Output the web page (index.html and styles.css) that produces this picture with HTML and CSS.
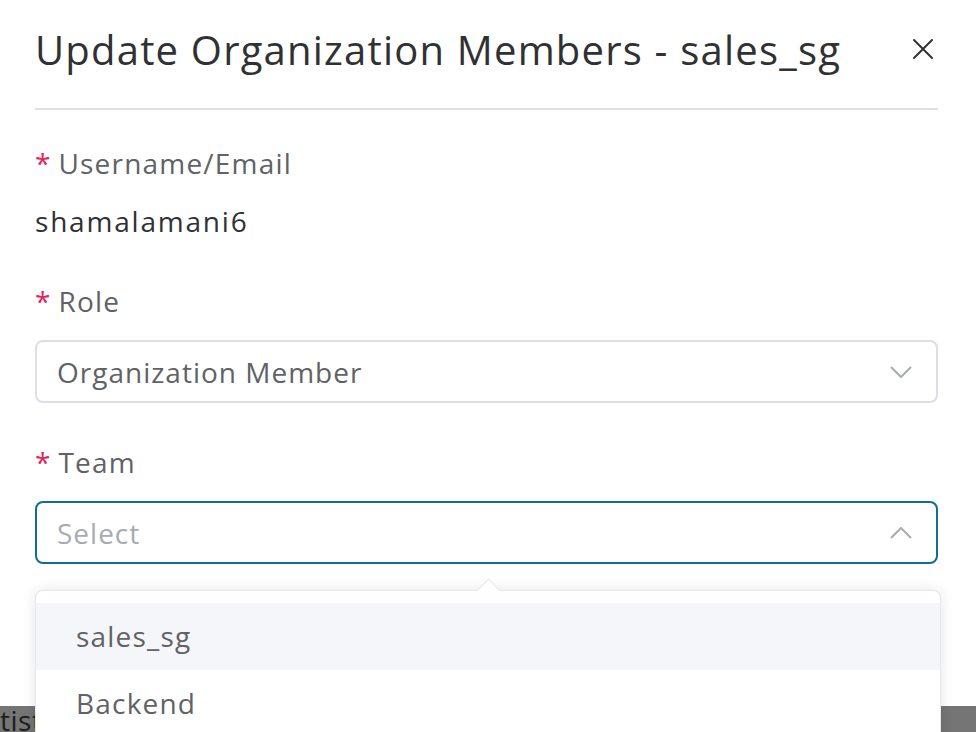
FILE: index.html
```html
<!DOCTYPE html>
<html>
<head>
<meta charset="utf-8">
<link rel="stylesheet" href="styles.css">
</head>
<body>
<div class="page">
  <div class="modal">
    <div class="header">
      <div class="title">Update Organization Members - sales_sg</div>
      <button class="close" aria-label="Close">
        <svg width="22" height="22" viewBox="0 0 22 22"><path d="M2 2 L20 20 M20 2 L2 20" stroke="#303133" stroke-width="2" fill="none" stroke-linecap="round"/></svg>
      </button>
    </div>
    <div class="form">
      <div class="item">
        <div class="label"><span class="req">*</span>Username/Email</div>
        <div class="value">shamalamani6</div>
      </div>
      <div class="item">
        <div class="label"><span class="req">*</span>Role</div>
        <div class="select">
          <span class="sel-text">Organization Member</span>
          <svg class="chev" width="22" height="12" viewBox="0 0 22 12"><path d="M1 1 L11 11 L21 1" stroke="#a8abb2" stroke-width="2" fill="none"/></svg>
        </div>
      </div>
      <div class="item">
        <div class="label"><span class="req">*</span>Team</div>
        <div class="select focus">
          <span class="sel-text placeholder">Select</span>
          <svg class="chev" width="22" height="12" viewBox="0 0 22 12"><path d="M1 11 L11 1 L21 11" stroke="#a8abb2" stroke-width="2" fill="none"/></svg>
        </div>
      </div>
    </div>
  </div>
  <div class="mask"><span class="behind">tist</span></div>
  <div class="dropdown">
    <div class="arrow"></div>
    <ul class="options">
      <li class="option hover">sales_sg</li>
      <li class="option">Backend</li>
    </ul>
  </div>
</div>
</body>
</html>
```

FILE: styles.css
```css
* { box-sizing: border-box; }
html, body { margin: 0; padding: 0; background: #fff; }
body { font-family: "Open Sans", "DejaVu Sans", sans-serif; }
.page { position: relative; width: 976px; height: 732px; overflow: hidden; }
.modal { height: 706px; background: #fff; padding: 0 38px 0 35px; }
.header {
  height: 110px;
  display: flex;
  align-items: center;
  justify-content: space-between;
  border-bottom: 2px solid #dcdfe6;
  padding-bottom: 10px;
}
.title { font-size: 40px; color: #303133; letter-spacing: 1.2px; white-space: nowrap; }
.close { background: none; border: 0; padding: 0; margin-right: 4px; width: 22px; height: 22px; display: flex; flex: none; }
.form { padding-top: 32px; }
.item { margin-bottom: 38px; }
.label { font-size: 28px; color: #606266; height: 42px; line-height: 42px; letter-spacing: 1.2px; }
.req { color: #e0245e; margin-right: 8px; letter-spacing: 0; }
.value { font-size: 28px; color: #303133; height: 62px; line-height: 62px; margin-top: 6px; letter-spacing: 1.8px; }
.item:first-child { margin-bottom: 28px; }
.select {
  margin-top: 18px;
  height: 63px;
  border: 2px solid #dcdfe6;
  border-radius: 8px;
  display: flex;
  align-items: center;
  justify-content: space-between;
  padding: 0 24px 0 20px;
}
.select.focus { border-color: #0f6e92; }
.sel-text { font-size: 28px; color: #606266; letter-spacing: 1px; }
.placeholder { color: #a8abb2; }
.mask {
  height: 26px;
  background: #757575;
  overflow: hidden;
  white-space: nowrap;
}
.behind { display: inline-block; font-size: 28px; line-height: 28px; color: #1d1d1d; letter-spacing: 0.5px; }
.dropdown {
  position: absolute;
  left: 35px;
  top: 590px;
  width: 906px;
  height: 160px;
  background: #fff;
  border: 1px solid #e4e7ed;
  border-radius: 8px;
  box-shadow: 0 0 14px rgba(0, 0, 0, 0.10);
}
.arrow {
  position: absolute;
  left: 444px;
  top: -9px;
  width: 17px;
  height: 17px;
  background: #fff;
  border-top: 1px solid #e4e7ed;
  border-left: 1px solid #e4e7ed;
  transform: rotate(45deg);
}
.options { list-style: none; margin: 0; padding: 12px 0 0; }
.option { height: 67px; line-height: 67px; padding-left: 40px; font-size: 28px; color: #606266; letter-spacing: 1.2px; }
.option.hover { background: #f5f6fa; }
```
